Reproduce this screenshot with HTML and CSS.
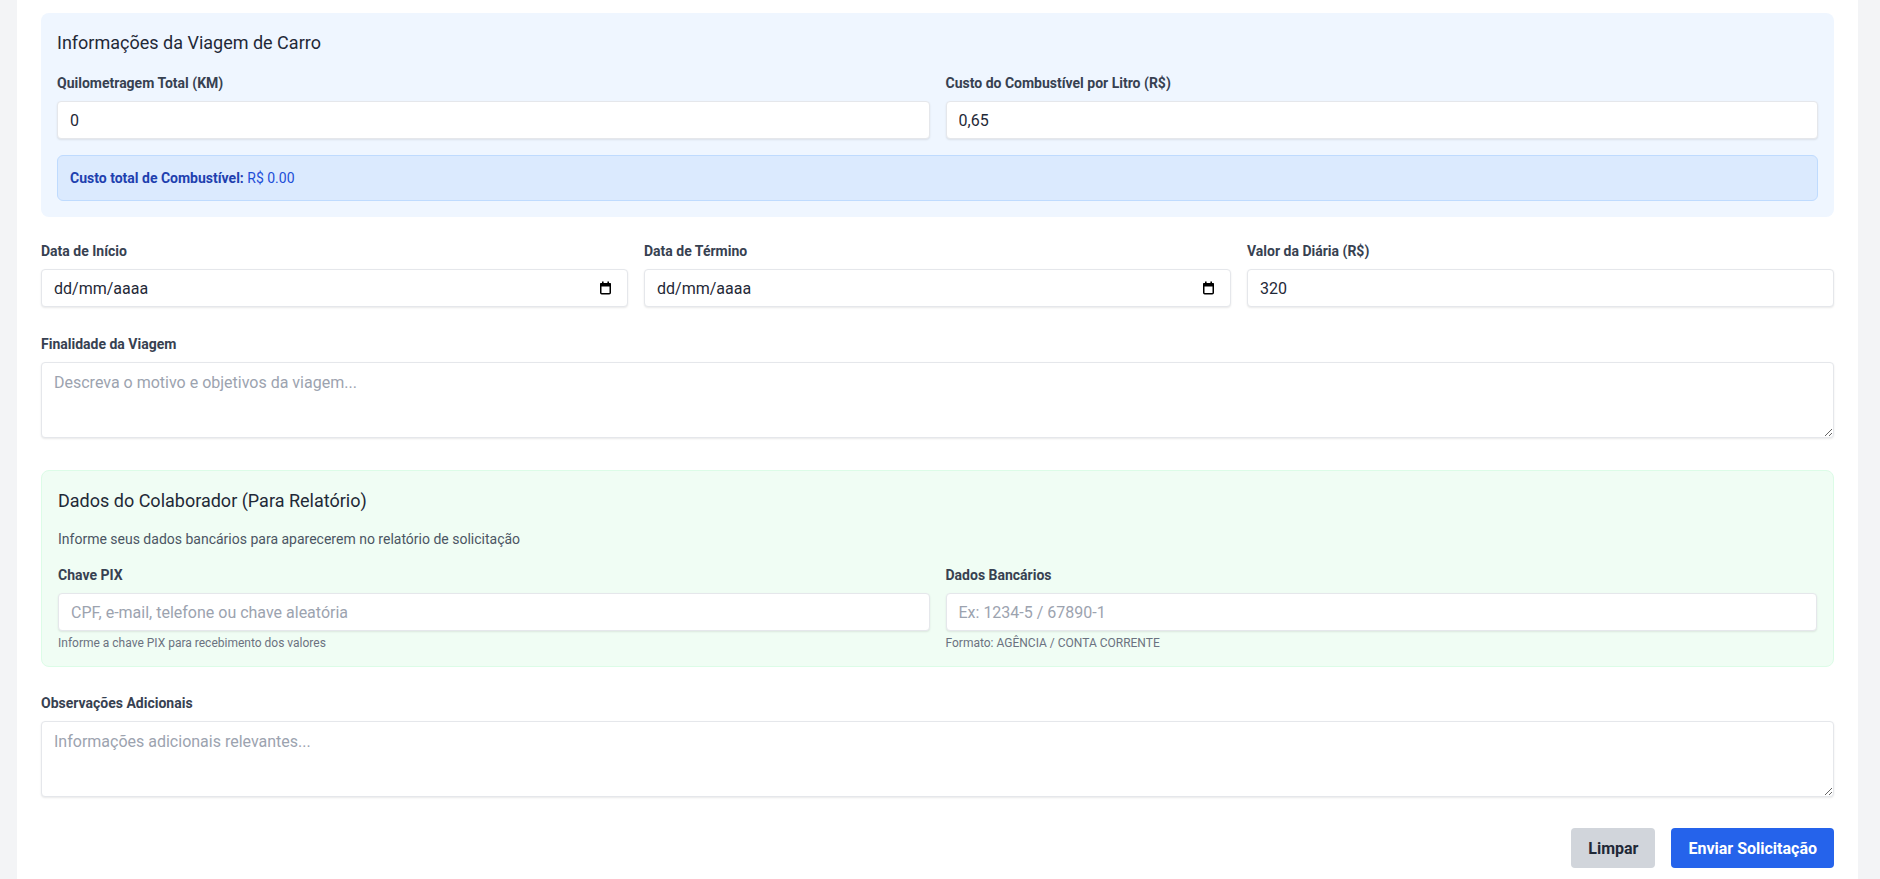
FILE: index.html
```html
<!DOCTYPE html>
<html lang="pt-BR">
<head>
<meta charset="utf-8">
<title>Solicitação de Viagem</title>
<link rel="stylesheet" href="styles.css">
</head>
<body>
<div class="page">
  <main class="card">
    <form class="form">
      <section class="panel panel-blue">
        <h3 class="panel-title">Informações da Viagem de Carro</h3>
        <div class="grid grid-2">
          <div class="field">
            <label class="label">Quilometragem Total (KM)</label>
            <input class="input" type="text" value="0">
          </div>
          <div class="field">
            <label class="label">Custo do Combustível por Litro (R$)</label>
            <input class="input" type="text" value="0,65">
          </div>
        </div>
        <div class="fuel-total"><strong>Custo total de Combustível:</strong> <span class="fuel-value">R$ 0.00</span></div>
      </section>

      <div class="grid grid-3 row-dates">
        <div class="field">
          <label class="label">Data de Início</label>
          <div class="input date-field">
            <span>dd/mm/aaaa</span>
            <svg class="cal-icon" width="13" height="14" viewBox="0 0 13 14" aria-hidden="true">
              <rect x="1.75" y="2.75" width="9.5" height="10" rx="1" fill="none" stroke="#000" stroke-width="1.5"/>
              <rect x="1" y="2" width="11" height="3.5" rx="1" fill="#000"/>
              <rect x="3" y="0.5" width="1.6" height="2.5" fill="#000"/>
              <rect x="8.4" y="0.5" width="1.6" height="2.5" fill="#000"/>
            </svg>
          </div>
        </div>
        <div class="field">
          <label class="label">Data de Término</label>
          <div class="input date-field">
            <span>dd/mm/aaaa</span>
            <svg class="cal-icon" width="13" height="14" viewBox="0 0 13 14" aria-hidden="true">
              <rect x="1.75" y="2.75" width="9.5" height="10" rx="1" fill="none" stroke="#000" stroke-width="1.5"/>
              <rect x="1" y="2" width="11" height="3.5" rx="1" fill="#000"/>
              <rect x="3" y="0.5" width="1.6" height="2.5" fill="#000"/>
              <rect x="8.4" y="0.5" width="1.6" height="2.5" fill="#000"/>
            </svg>
          </div>
        </div>
        <div class="field">
          <label class="label">Valor da Diária (R$)</label>
          <input class="input" type="text" value="320">
        </div>
      </div>

      <div class="field row-purpose">
        <label class="label">Finalidade da Viagem</label>
        <textarea class="input textarea" placeholder="Descreva o motivo e objetivos da viagem..."></textarea>
      </div>

      <section class="panel panel-green">
        <h3 class="panel-title green-title">Dados do Colaborador (Para Relatório)</h3>
        <p class="panel-sub">Informe seus dados bancários para aparecerem no relatório de solicitação</p>
        <div class="grid grid-2">
          <div class="field">
            <label class="label">Chave PIX</label>
            <input class="input" type="text" placeholder="CPF, e-mail, telefone ou chave aleatória">
            <p class="help">Informe a chave PIX para recebimento dos valores</p>
          </div>
          <div class="field">
            <label class="label">Dados Bancários</label>
            <input class="input" type="text" placeholder="Ex: 1234-5 / 67890-1">
            <p class="help">Formato: AGÊNCIA / CONTA CORRENTE</p>
          </div>
        </div>
      </section>

      <div class="field row-notes">
        <label class="label">Observações Adicionais</label>
        <textarea class="input textarea" placeholder="Informações adicionais relevantes..."></textarea>
      </div>

      <div class="actions">
        <button type="button" class="btn btn-gray">Limpar</button>
        <button type="button" class="btn btn-blue">Enviar Solicitação</button>
      </div>
    </form>
  </main>
</div>
</body>
</html>
```

FILE: styles.css
```css
* { box-sizing: border-box; }
html, body { margin: 0; padding: 0; }
body {
  background: #f3f4f6;
  font-family: Roboto, "Noto Sans", "Liberation Sans", sans-serif;
  color: #1f2937;
  overflow: hidden;
}
.page { padding: 0 22px 0 17px; }
.card {
  background: #fff;
  padding: 13px 24px 10px;
  min-height: 879px;
}
.form { margin: 0; }

.panel-blue {
  background: #eff6ff;
  border-radius: 8px;
  padding: 16px;
}
.panel-title {
  margin: 0 0 16px;
  font-size: 18px;
  line-height: 28px;
  font-weight: 400;
  color: #1f2937;
}

.grid { display: grid; column-gap: 16px; }
.grid-2 { grid-template-columns: 1fr 1fr; }
.grid-3 { grid-template-columns: repeat(3, 1fr); }

.label {
  display: block;
  font-size: 14px;
  line-height: 20px;
  font-weight: 700;
  color: #374151;
  margin-bottom: 8px;
}

.input {
  display: block;
  width: 100%;
  height: 38px;
  margin: 0;
  padding: 0 12px;
  font-family: inherit;
  font-size: 16px;
  color: #1f2937;
  background: #fff;
  border: 1px solid #e5e7eb;
  border-radius: 4px;
  box-shadow: 0 1px 2px rgba(0, 0, 0, 0.09);
  outline: none;
}
.input::placeholder { color: #9ca3af; }

.date-field {
  display: flex;
  align-items: center;
  justify-content: space-between;
  padding-right: 15px;
}
.cal-icon { display: block; flex: none; }

.fuel-total {
  margin-top: 16px;
  background: #dbeafe;
  border: 1px solid #bfdbfe;
  border-radius: 6px;
  padding: 12px;
  font-size: 14px;
  line-height: 20px;
  color: #1d4ed8;
}
.fuel-total strong { color: #1e40af; font-weight: 700; }

.row-dates { margin-top: 24px; }
.row-purpose { margin-top: 27px; }

.textarea {
  height: 76px;
  padding: 8px 12px;
  line-height: 24px;
  resize: vertical;
}

.panel-green {
  margin-top: 32px;
  background: #f0fdf4;
  border: 1px solid #dcfce7;
  border-radius: 8px;
  padding: 16px 16px 15px;
}
.green-title { margin-bottom: 14px; }
.panel-sub {
  margin: 0 0 16px;
  font-size: 14px;
  line-height: 20px;
  color: #4b5563;
}
.help {
  margin: 4px 0 0;
  font-size: 12px;
  line-height: 16px;
  color: #6b7280;
}

.row-notes { margin-top: 26px; }

.actions {
  margin-top: 31px;
  display: flex;
  justify-content: flex-end;
  gap: 16px;
}
.btn {
  height: 40px;
  padding: 0 17px;
  border: none;
  border-radius: 4px;
  font-family: inherit;
  font-size: 16px;
  font-weight: 700;
  cursor: pointer;
}
.btn-gray { background: #d1d5db; color: #1f2937; }
.btn-blue { background: #2563eb; color: #fff; }
```
